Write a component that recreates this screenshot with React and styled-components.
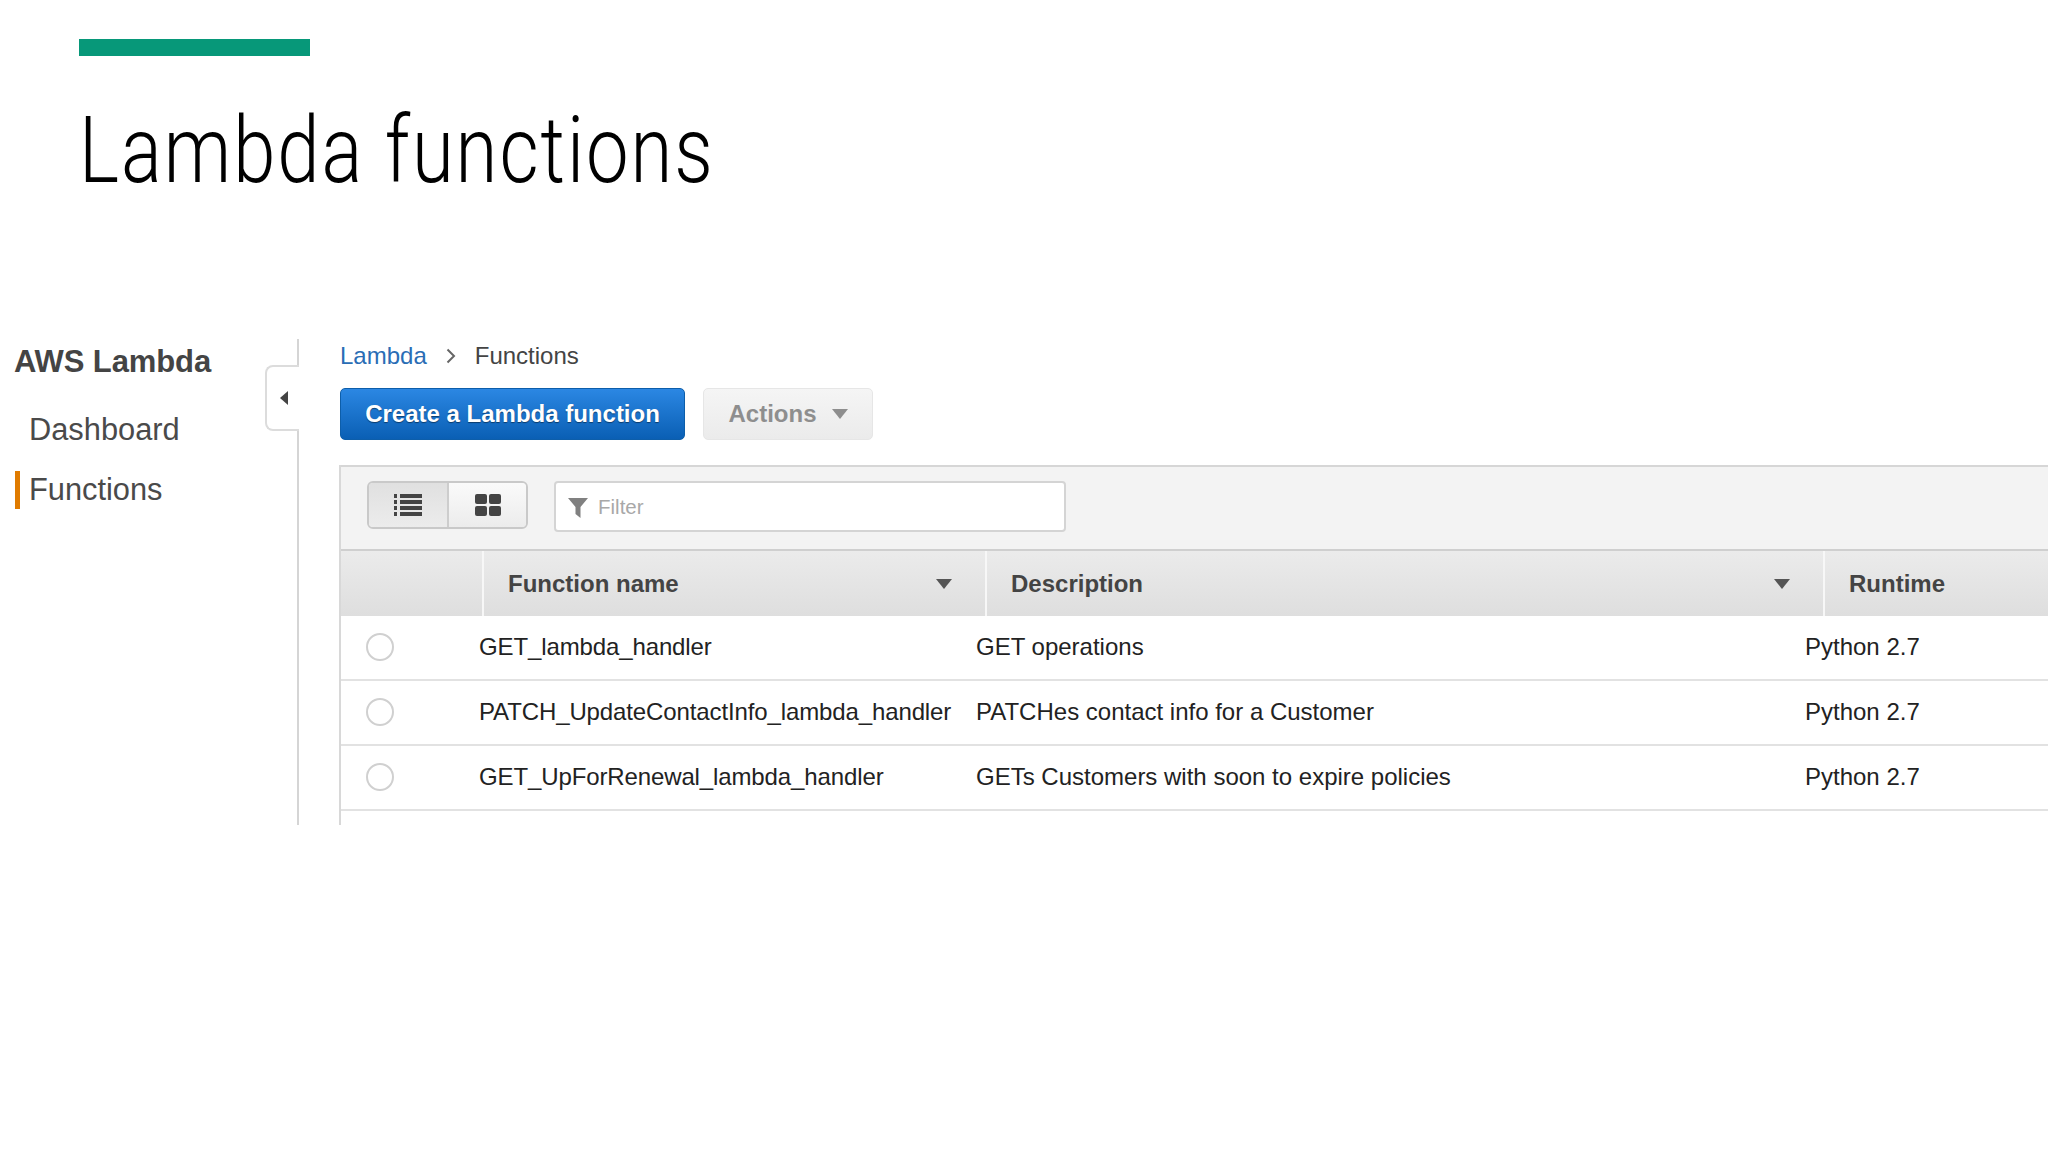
import styled, { createGlobalStyle } from "styled-components";

const GlobalStyle = createGlobalStyle`
  html, body {
    margin: 0;
    padding: 0;
    background: #fff;
    overflow: hidden;
  }
  body {
    font-family: "Liberation Sans", Arial, sans-serif;
  }
`;

const Page = styled.div`
  width: 2048px;
  height: 1152px;
  padding-top: 39px;
  box-sizing: border-box;
`;

const AccentBar = styled.div`
  width: 231px;
  height: 17px;
  margin-left: 79px;
  background: #079879;
`;

const Title = styled.h1`
  margin: 35px 0 0 79px;
  height: 120px;
  font-family: Roboto, "Liberation Sans", sans-serif;
  font-weight: 300;
  font-size: 92px;
  line-height: 120px;
  letter-spacing: 2.4px;
  color: #000;
  white-space: nowrap;
  transform: scaleX(0.826);
  transform-origin: left center;
`;

const Console = styled.div`
  display: flex;
  margin-top: 128px;
  height: 486px;
`;

const Sidebar = styled.aside`
  position: relative;
  width: 297px;
  flex: none;
  border-right: 2px solid #d5d5d5;
  box-sizing: content-box;
  padding-top: 4px;
`;

const Brand = styled.div`
  margin-left: 14px;
  font-size: 31px;
  line-height: 38px;
  font-weight: 700;
  letter-spacing: -0.1px;
  color: #444;
`;

const NavList = styled.div`
  display: flex;
  flex-direction: column;
  gap: 22px;
  margin-top: 30px;
`;

const NavItem = styled.div`
  margin-left: 15px;
  padding-left: ${(p) => (p.$active ? "9px" : "14px")};
  border-left: ${(p) => (p.$active ? "5px solid #e07b00" : "none")};
  font-size: 30.8px;
  line-height: 38px;
  color: #4a4a4a;
`;

const CollapseTab = styled.div`
  position: absolute;
  left: 265px;
  top: 26px;
  width: 34px;
  height: 66px;
  box-sizing: border-box;
  display: flex;
  align-items: center;
  padding-left: 13px;
  background: #fff;
  border: 2px solid #dcdcdc;
  border-right: none;
  border-radius: 8px 0 0 8px;
`;

const Main = styled.main`
  flex: 1;
  min-width: 0;
  padding-left: 40px;
`;

const Crumbs = styled.nav`
  display: flex;
  align-items: center;
  height: 34px;
  margin-left: 1px;
  font-size: 24px;
  color: #444;
`;

const CrumbLink = styled.span`
  color: #2a6db5;
`;

const CrumbSep = styled.span`
  display: flex;
  width: 48px;
  justify-content: center;
`;

const Actions = styled.div`
  display: flex;
  gap: 18px;
  margin: 15px 0 0 1px;
`;

const PrimaryButton = styled.div`
  width: 345px;
  height: 52px;
  display: flex;
  align-items: center;
  justify-content: center;
  box-sizing: border-box;
  border-radius: 5px;
  border: 1px solid #0d5eaa;
  background: linear-gradient(#2b87e3, #0a5fb4);
  color: #fff;
  font-size: 24px;
  font-weight: 700;
  text-shadow: 0 1px 1px rgba(0, 0, 0, 0.45);
`;

const DisabledButton = styled.div`
  width: 170px;
  height: 52px;
  display: flex;
  align-items: center;
  justify-content: center;
  gap: 15px;
  box-sizing: border-box;
  border-radius: 5px;
  border: 1px solid #e6e6e6;
  background: linear-gradient(#f5f5f5, #ebebeb);
  color: #8e8e8e;
  font-size: 24px;
  font-weight: 700;
`;

const Table = styled.section`
  margin-top: 25px;
  border-left: 2px solid #d8d8d8;
  height: 360px;
`;

const Toolbar = styled.div`
  display: flex;
  align-items: flex-start;
  gap: 26px;
  height: 86px;
  box-sizing: border-box;
  padding: 14px 0 0 26px;
  background: #f3f3f3;
  border-top: 2px solid #d6d6d6;
  border-bottom: 2px solid #cfcfcf;
`;

const ViewSwitch = styled.div`
  display: flex;
  width: 161px;
  height: 48px;
  box-sizing: border-box;
  border: 2px solid #c9c9c9;
  border-radius: 6px;
  overflow: hidden;
`;

const ViewButton = styled.div`
  display: flex;
  align-items: center;
  justify-content: center;
  width: ${(p) => (p.$active ? "79px" : "78px")};
  background: ${(p) =>
    p.$active ? "linear-gradient(#e0e0e0, #ececec)" : "linear-gradient(#fafafa, #ececec)"};
  border-right: ${(p) => (p.$active ? "2px solid #cdcdcd" : "none")};
`;

const FilterBox = styled.div`
  display: flex;
  align-items: center;
  width: 512px;
  height: 51px;
  box-sizing: border-box;
  padding-left: 12px;
  gap: 10px;
  background: #fff;
  border: 2px solid #d4d4d4;
  border-radius: 4px;
  color: #a8a8a8;
  font-size: 20.5px;
`;

const FunnelSvg = styled.svg`
  margin-top: 3px;
`;

const HeadRow = styled.div`
  display: grid;
  grid-template-columns: 141px 503px 838px 1fr;
  height: 65px;
  background: linear-gradient(#ebebeb, #dedede);
`;

const HeadCell = styled.div`
  display: flex;
  align-items: center;
  justify-content: space-between;
  box-sizing: border-box;
  padding: 0 ${(p) => (p.$caret ? "33px" : "0")} 0 24px;
  border-left: ${(p) => (p.$plain ? "none" : "2px solid #f7f7f7")};
  font-size: 24px;
  font-weight: 700;
  color: #444;
  white-space: nowrap;
`;

const Row = styled.div`
  display: grid;
  grid-template-columns: 138px 497px 829px 1fr;
  align-items: center;
  height: 65px;
  box-sizing: border-box;
  padding-bottom: 2px;
  border-bottom: 2px solid #e2e2e2;
  font-size: 24px;
  color: #222;
  white-space: nowrap;
`;

const RadioCell = styled.div`
  display: flex;
  padding-left: 25px;
`;

const Radio = styled.span`
  width: 28px;
  height: 28px;
  box-sizing: border-box;
  border: 2px solid #d0d0d0;
  border-radius: 50%;
  background: #fff;
`;

const FunctionName = styled.span`
  letter-spacing: -0.12px;
`;

const Caret = ({ color = "#555", w = 16, h = 10 }) => (
  <svg width={w} height={h} viewBox="0 0 16 10">
    <path d="M0 0H16L8 10Z" fill={color} />
  </svg>
);

const ListIcon = () => (
  <svg width="28" height="24" viewBox="0 0 28 24" fill="#444">
    <rect x="0" y="1" width="3" height="4" />
    <rect x="6" y="1" width="22" height="4" />
    <rect x="0" y="7" width="3" height="4" />
    <rect x="6" y="7" width="22" height="4" />
    <rect x="0" y="13" width="3" height="4" />
    <rect x="6" y="13" width="22" height="4" />
    <rect x="0" y="19" width="3" height="4" />
    <rect x="6" y="19" width="22" height="4" />
  </svg>
);

const GridIcon = () => (
  <svg width="26" height="24" viewBox="0 0 26 24" fill="#444">
    <rect x="0" y="1" width="12" height="10" rx="2" />
    <rect x="14" y="1" width="12" height="10" rx="2" />
    <rect x="0" y="13" width="12" height="10" rx="2" />
    <rect x="14" y="13" width="12" height="10" rx="2" />
  </svg>
);

const FunnelIcon = () => (
  <FunnelSvg width="20" height="22" viewBox="0 0 20 22" fill="#808080">
    <path d="M0 1H20L12.5 10V21L7.5 17V10Z" />
  </FunnelSvg>
);

const rows = [
  { name: "GET_lambda_handler", description: "GET operations" },
  { name: "PATCH_UpdateContactInfo_lambda_handler", description: "PATCHes contact info for a Customer" },
  { name: "GET_UpForRenewal_lambda_handler", description: "GETs Customers with soon to expire policies" },
];

export default function App() {
  return (
    <Page>
      <GlobalStyle />
      <AccentBar />
      <Title>Lambda functions</Title>
      <Console>
        <Sidebar>
          <Brand>AWS Lambda</Brand>
          <NavList>
            <NavItem>Dashboard</NavItem>
            <NavItem $active>Functions</NavItem>
          </NavList>
          <CollapseTab>
            <svg width="8" height="14" viewBox="0 0 8 14">
              <path d="M8 0V14L0 7Z" fill="#444" />
            </svg>
          </CollapseTab>
        </Sidebar>
        <Main>
          <Crumbs>
            <CrumbLink>Lambda</CrumbLink>
            <CrumbSep>
              <svg width="10" height="16" viewBox="0 0 10 16">
                <path d="M1.5 1.5L8 8L1.5 14.5" fill="none" stroke="#666" strokeWidth="2" />
              </svg>
            </CrumbSep>
            <span>Functions</span>
          </Crumbs>
          <Actions>
            <PrimaryButton>Create a Lambda function</PrimaryButton>
            <DisabledButton>
              Actions
              <Caret color="#8e8e8e" />
            </DisabledButton>
          </Actions>
          <Table>
            <Toolbar>
              <ViewSwitch>
                <ViewButton $active>
                  <ListIcon />
                </ViewButton>
                <ViewButton>
                  <GridIcon />
                </ViewButton>
              </ViewSwitch>
              <FilterBox>
                <FunnelIcon />
                Filter
              </FilterBox>
            </Toolbar>
            <HeadRow>
              <HeadCell $plain />
              <HeadCell $caret>
                Function name
                <Caret />
              </HeadCell>
              <HeadCell $caret>
                Description
                <Caret />
              </HeadCell>
              <HeadCell>Runtime</HeadCell>
            </HeadRow>
            {rows.map((row) => (
              <Row key={row.name}>
                <RadioCell>
                  <Radio />
                </RadioCell>
                <FunctionName>{row.name}</FunctionName>
                <span>{row.description}</span>
                <span>Python 2.7</span>
              </Row>
            ))}
          </Table>
        </Main>
      </Console>
    </Page>
  );
}
